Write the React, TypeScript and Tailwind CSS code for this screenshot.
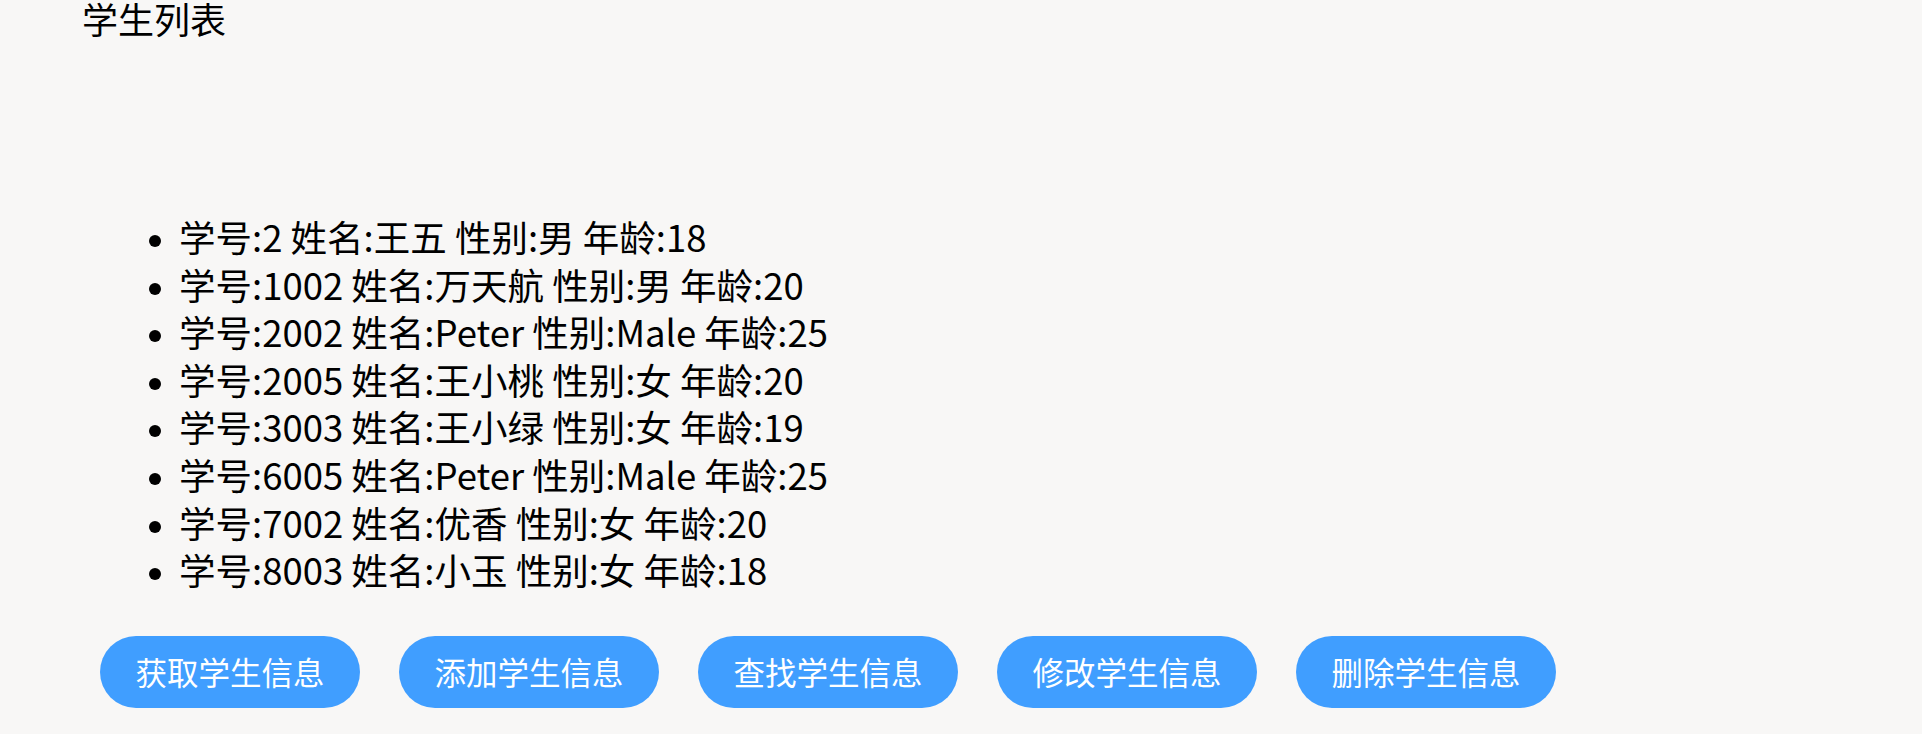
const students = [
  { id: 2, name: "王五", sex: "男", age: 18 },
  { id: 1002, name: "万天航", sex: "男", age: 20 },
  { id: 2002, name: "Peter", sex: "Male", age: 25 },
  { id: 2005, name: "王小桃", sex: "女", age: 20 },
  { id: 3003, name: "王小绿", sex: "女", age: 19 },
  { id: 6005, name: "Peter", sex: "Male", age: 25 },
  { id: 7002, name: "优香", sex: "女", age: 20 },
  { id: 8003, name: "小玉", sex: "女", age: 18 },
];

const actions = ["获取学生信息", "添加学生信息", "查找学生信息", "修改学生信息", "删除学生信息"];

export default function App() {
  return (
    <div
      className="min-h-[734px] bg-[#f8f7f6] text-black"
      style={{ fontFamily: '"Noto Sans CJK SC", "Noto Sans", sans-serif' }}
    >
      <div className="pl-[82px]">
        <h1 className="text-[36px] font-normal leading-[36px]">学生列表</h1>
        <ul className="mt-[177px] list-disc pl-[97px] text-[36.5px] leading-[47.6px] marker:text-[30px]">
          {students.map((s) => (
            <li key={s.id}>
              学号:{s.id} 姓名:{s.name} 性别:{s.sex} 年龄:{s.age}
            </li>
          ))}
        </ul>
        <div className="mt-[42px] flex gap-[39px] pl-[18px]">
          {actions.map((label) => (
            <button
              key={label}
              className="h-[72px] w-[260px] rounded-full bg-[#409eff] text-[31.5px] leading-none text-white"
            >
              {label}
            </button>
          ))}
        </div>
      </div>
    </div>
  );
}
